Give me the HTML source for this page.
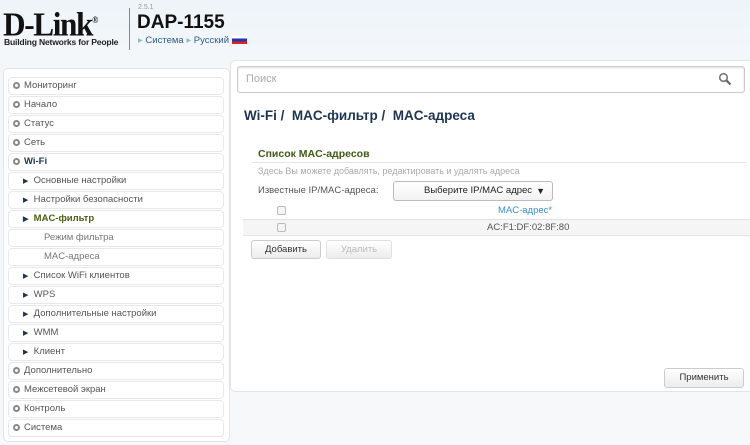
<!DOCTYPE html>
<html><head><meta charset="utf-8"><style>
*{box-sizing:border-box;margin:0;padding:0}
body{width:750px;height:445px;overflow:hidden;font-family:"Liberation Sans",sans-serif;background:linear-gradient(#eef4f9,#f4f7fa 60px,#f6f8fa);position:relative;font-size:10px;color:#555}
.abs{position:absolute}
.logo{left:3px;top:4px;font-family:"Liberation Serif",serif;font-weight:bold;font-size:34px;color:#111;letter-spacing:-1.5px;line-height:32px;transform:scaleX(0.92);transform-origin:left}
.tag{left:4px;top:37px;font-weight:bold;font-size:8.6px;color:#222;letter-spacing:-0.2px}
.sep{left:129px;top:8px;width:1px;height:42px;background:#888}
.side{left:3px;top:68px;width:227px;height:374px;background:#fff;border:1px solid #e2e5e8;border-radius:5px}
.it{position:absolute;left:8px;width:216px;height:18px;border:1px solid #e6e8ea;border-radius:4px;background:#fff;font-size:9.5px;color:#555;line-height:16px}
.o{display:inline-block;width:7px;height:7px;border:2px solid #888;border-radius:50%;margin:0 4px 0 4px;vertical-align:-0.5px}
.main{left:230px;top:60px;width:524px;height:332px;background:#fff;border:1px solid #e2e5e8;border-radius:5px}
.btn{position:absolute;border:1px solid #ccc;border-radius:3px;background:linear-gradient(#fff,#ececec);font-size:9.5px;text-align:center;line-height:18px;color:#333}
.cb{position:absolute;width:9px;height:9px;border:1px solid #bbb;border-radius:2px;background:#f4f4f4}
</style></head><body>
<div class="abs logo">D-Link<sup style="font-size:9px">®</sup></div>
<div class="abs tag">Building Networks for People</div>
<div class="abs sep"></div>
<div class="abs" style="left:138px;top:4px;font-size:7px;color:#999">2.5.1</div>
<div class="abs" style="left:137px;top:12px;font-size:19px;color:#111;font-weight:bold">DAP-1155</div>
<div class="abs" style="left:138px;top:35px;font-size:9.5px;color:#2a5d8a"><span style="color:#9bb">▸</span> Система <span style="color:#9bb">▸</span> Русский <span style="display:inline-block;width:15px;height:8px;vertical-align:-1px;background:linear-gradient(#fff 33%,#2233bb 33%,#2233bb 66%,#d22 66%)"></span></div>

<div class="abs side"></div>
<div class="abs main"></div>
<div class="abs" style="left:237px;top:66px;width:508px;height:27px;border:1px solid #ccc;border-radius:3px;background:#fff;box-shadow:inset 0 1px 2px #ddd"></div>
<div class="abs" style="left:246px;top:73px;font-size:11px;color:#aaa">Поиск</div>
<svg class="abs" style="left:718px;top:72px" width="14" height="14" viewBox="0 0 14 14"><circle cx="5.5" cy="5.5" r="3.8" fill="none" stroke="#777" stroke-width="1.6"/><path d="M8.3 8.3L12.5 12.5" stroke="#666" stroke-width="2.2"/></svg>
<div class="abs" style="left:244px;top:108px;font-size:13.5px;font-weight:bold;color:#1d3550">Wi-Fi /&nbsp; MAC-фильтр /&nbsp; MAC-адреса</div>
<div class="abs" style="left:258px;top:148px;font-size:10.5px;font-weight:bold;color:#3e5a14">Список MAC-адресов</div>
<div class="abs" style="left:252px;top:162px;width:495px;height:1px;background:#e4e4e4"></div>
<div class="abs" style="left:258px;top:166px;font-size:9px;color:#aaa">Здесь Вы можете добавлять, редактировать и удалять адреса</div>
<div class="abs" style="left:258px;top:185px;font-size:9.5px;color:#555">Известные IP/MAC-адреса:</div>
<div class="abs" style="left:393px;top:181px;width:160px;height:20px;border:1px solid #bbb;border-radius:3px;background:linear-gradient(#fff,#f2f2f2);font-size:9.5px;color:#222;line-height:18px;padding-left:30px">Выберите IP/MAC адрес<span style="position:absolute;right:7px;font-size:9px">▼</span></div>
<div class="cb" style="left:277px;top:206px"></div>
<div class="abs" style="left:498px;top:205px;font-size:9.5px;color:#3a8fd0">MAC-адрес*</div>
<div class="abs" style="left:243px;top:219px;width:507px;height:17px;background:#f5f5f5;border-top:1px solid #e2e2e2;border-bottom:1px solid #e2e2e2"></div>
<div class="cb" style="left:277px;top:223px"></div>
<div class="abs" style="left:487px;top:222px;font-size:9.5px;color:#555">AC:F1:DF:02:8F:80</div>
<div class="btn" style="left:251px;top:240px;width:70px;height:19px">Добавить</div>
<div class="btn" style="left:326px;top:240px;width:66px;height:19px;color:#bbb;border-color:#e0e0e0">Удалить</div>
<div class="btn" style="left:664px;top:368px;width:80px;height:20px">Применить</div>

<div class="it" style="top:77px"><span class="o"></span>Мониторинг</div>
<div class="it" style="top:96px"><span class="o"></span>Начало</div>
<div class="it" style="top:115px"><span class="o"></span>Статус</div>
<div class="it" style="top:134px"><span class="o"></span>Сеть</div>
<div class="it" style="top:153px;color:#1d3550;font-weight:bold"><span class="o"></span>Wi-Fi</div>
<div class="it" style="top:172px;padding-left:14px"><span style="font-size:7px;color:#1d3550">▶</span>&nbsp; Основные настройки</div>
<div class="it" style="top:191px;padding-left:14px"><span style="font-size:7px;color:#1d3550">▶</span>&nbsp; Настройки безопасности</div>
<div class="it" style="top:210px;padding-left:14px;color:#4a6010;font-weight:bold"><span style="font-size:7px;color:#1d3550">▶</span>&nbsp; MAC-фильтр</div>
<div class="it" style="top:229px;padding-left:35px;color:#777">Режим фильтра</div>
<div class="it" style="top:248px;padding-left:35px;color:#777">MAC-адреса</div>
<div class="it" style="top:267px;padding-left:14px"><span style="font-size:7px;color:#1d3550">▶</span>&nbsp; Список WiFi клиентов</div>
<div class="it" style="top:286px;padding-left:14px"><span style="font-size:7px;color:#1d3550">▶</span>&nbsp; WPS</div>
<div class="it" style="top:305px;padding-left:14px"><span style="font-size:7px;color:#1d3550">▶</span>&nbsp; Дополнительные настройки</div>
<div class="it" style="top:324px;padding-left:14px"><span style="font-size:7px;color:#1d3550">▶</span>&nbsp; WMM</div>
<div class="it" style="top:343px;padding-left:14px"><span style="font-size:7px;color:#1d3550">▶</span>&nbsp; Клиент</div>
<div class="it" style="top:362px"><span class="o"></span>Дополнительно</div>
<div class="it" style="top:381px"><span class="o"></span>Межсетевой экран</div>
<div class="it" style="top:400px"><span class="o"></span>Контроль</div>
<div class="it" style="top:419px"><span class="o"></span>Система</div>
</body></html>
